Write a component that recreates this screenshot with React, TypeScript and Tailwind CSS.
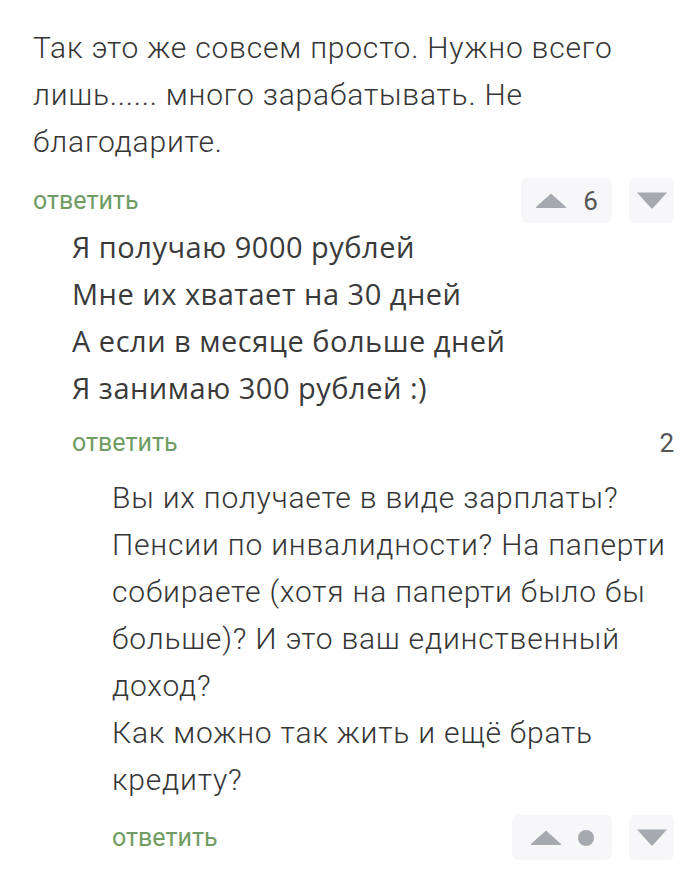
import React from 'react';

const roboto = { fontFamily: 'Roboto, "Liberation Sans", sans-serif' };

function UpArrow() {
  return (
    <svg width="32" height="15" viewBox="0 0 32 15" className="block">
      <path d="M16 1 L31 14.5 L1 14.5 Z" fill="#a7a9b1" stroke="#a7a9b1" strokeWidth="1" strokeLinejoin="round" />
    </svg>
  );
}

function DownArrow() {
  return (
    <svg width="32" height="17" viewBox="0 0 32 17" className="block">
      <path d="M1 0.5 L31 0.5 L17 16 Q16 17 15 16 Z" fill="#a7a9b1" />
    </svg>
  );
}

function ReplyLink() {
  return (
    <span className="text-[25px] leading-none text-[#6f9c62] font-[Roboto,'Liberation_Sans',sans-serif]">
      ответить
    </span>
  );
}

function Votes({ value, width }: { value: React.ReactNode; width: string }) {
  return (
    <div className="flex items-center gap-[17px]">
      <div className={`flex h-[45px] items-center justify-center gap-[16px] rounded-md bg-[#f7f7fa] ${width}`}>
        <UpArrow />
        {value}
      </div>
      <div className="flex h-[45px] w-[45px] items-center justify-center rounded-md bg-[#f7f7fa]">
        <DownArrow />
      </div>
    </div>
  );
}

export default function App() {
  return (
    <div className="min-h-[875px] w-[700px] bg-white text-[#363636]" style={roboto}>
      <div className="pl-[33px] pr-[26px] pt-[24px]">
        <div className="text-[30px] leading-[47px] tracking-[0.8px] font-light font-[Roboto,'Liberation_Sans',sans-serif]">
          <div className="whitespace-nowrap">Так это же совсем просто. Нужно всего</div>
          <div className="whitespace-nowrap">лишь...... много зарабатывать. Не</div>
          <div className="whitespace-nowrap">благодарите.</div>
        </div>

        <div className="mt-[13px] flex h-[45px] items-center justify-between">
          <ReplyLink />
          <Votes
            width="w-[91px]"
            value={<span className="text-[26px] leading-none text-[#555]">6</span>}
          />
        </div>

        <div className="pl-[39px]">
          <div className="text-[29px] leading-[47px] tracking-[0.5px] text-[#3a3a3a] font-['Open_Sans','Noto_Sans',sans-serif]">
            <div className="whitespace-nowrap">Я получаю 9000 рублей</div>
            <div className="whitespace-nowrap">Мне их хватает на 30 дней</div>
            <div className="whitespace-nowrap">А если в месяце больше дней</div>
            <div className="whitespace-nowrap">Я занимаю 300 рублей :)</div>
          </div>

          <div className="mt-[9px] flex h-[45px] items-center justify-between">
            <ReplyLink />
            <span className="text-[26px] leading-none text-[#555]">2</span>
          </div>

          <div className="mt-[9px] pl-[40px]">
            <div className="text-[30px] leading-[47px] tracking-[0.8px] font-light font-[Roboto,'Liberation_Sans',sans-serif]">
              <div className="whitespace-nowrap">Вы их получаете в виде зарплаты?</div>
              <div className="whitespace-nowrap">Пенсии по инвалидности? На паперти</div>
              <div className="whitespace-nowrap">собираете (хотя на паперти было бы</div>
              <div className="whitespace-nowrap">больше)? И это ваш единственный</div>
              <div className="whitespace-nowrap">доход?</div>
              <div className="whitespace-nowrap">Как можно так жить и ещё брать</div>
              <div className="whitespace-nowrap">кредиту?</div>
            </div>

            <div className="mt-[12px] flex h-[45px] items-center justify-between">
              <ReplyLink />
              <Votes
                width="w-[100px]"
                value={<span className="block h-[16px] w-[16px] rounded-full bg-[#a7a9b1]" />}
              />
            </div>
          </div>
        </div>
      </div>
    </div>
  );
}
